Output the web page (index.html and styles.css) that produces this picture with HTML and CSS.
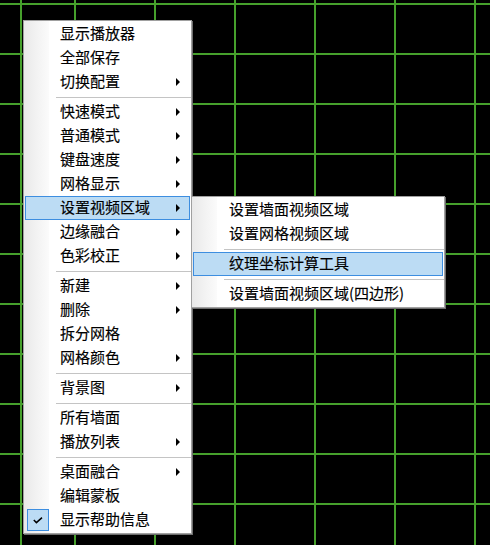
FILE: index.html
```html
<!DOCTYPE html>
<html lang="zh-CN">
<head>
<meta charset="utf-8">
<title>Menu</title>
<link rel="stylesheet" href="styles.css">
</head>
<body>
<div class="canvas">
  <div class="menu main-menu">
    <div class="item">显示播放器</div>
    <div class="item">全部保存</div>
    <div class="item sub">切换配置</div>
    <div class="sep"></div>
    <div class="item sub">快速模式</div>
    <div class="item sub">普通模式</div>
    <div class="item sub">键盘速度</div>
    <div class="item sub">网格显示</div>
    <div class="item sub hl">设置视频区域</div>
    <div class="item sub">边缘融合</div>
    <div class="item sub">色彩校正</div>
    <div class="sep"></div>
    <div class="item sub">新建</div>
    <div class="item sub">删除</div>
    <div class="item">拆分网格</div>
    <div class="item sub">网格颜色</div>
    <div class="sep"></div>
    <div class="item sub">背景图</div>
    <div class="sep"></div>
    <div class="item">所有墙面</div>
    <div class="item sub">播放列表</div>
    <div class="sep"></div>
    <div class="item sub">桌面融合</div>
    <div class="item">编辑蒙板</div>
    <div class="item checked"><span class="check"><svg width="10" height="7" viewBox="0 0 10 7"><path d="M0.8 3 L3.4 5.6 L9 0.6" fill="none" stroke="#000" stroke-width="1.5"/></svg></span>显示帮助信息</div>
  </div>
  <div class="menu sub-menu">
    <div class="item">设置墙面视频区域</div>
    <div class="item">设置网格视频区域</div>
    <div class="sep"></div>
    <div class="item hl">纹理坐标计算工具</div>
    <div class="sep"></div>
    <div class="item">设置墙面视频区域(四边形)</div>
  </div>
</div>
</body>
</html>
```
FILE: styles.css
```css
html, body {
  margin: 0;
  padding: 0;
  background: #000;
}

.canvas {
  position: relative;
  width: 490px;
  height: 545px;
  overflow: hidden;
  background-color: #000;
  background-image:
    linear-gradient(to right, transparent 20px, #46a02c 20px, #46a02c 22px, transparent 22px),
    repeating-linear-gradient(to right, transparent 0 74px, #46a02c 74px 76px, transparent 76px 80px),
    repeating-linear-gradient(to bottom, transparent 0 3px, #46a02c 3px 5px, transparent 5px 50px);
  font-family: "Noto Sans CJK SC", "Noto Sans", sans-serif;
  font-size: 15px;
  color: #000;
}

.menu {
  position: absolute;
  box-sizing: border-box;
  border: 1px solid #a0a0a0;
  box-shadow: 1px 1px 0 #6e6e6e;
  padding: 1px;
  background-color: #fff;
  background-image: linear-gradient(to right, #e9e9e9, #fbfbfb);
  background-size: 25px 100%;
  background-repeat: no-repeat;
}

.main-menu {
  left: 23px;
  top: 20px;
  width: 169px;
}

.sub-menu {
  left: 191px;
  top: 196px;
  width: 254px;
}

.item {
  position: relative;
  box-sizing: border-box;
  height: 24px;
  line-height: 22px;
  padding-left: 35px;
  white-space: nowrap;
  -webkit-text-stroke: 0.15px #000;
}

.sub-menu .item {
  padding-left: 36px;
}

.item.sub::after {
  content: "";
  position: absolute;
  right: 10px;
  top: 8px;
  width: 0;
  height: 0;
  border-left: 4px solid #000;
  border-top: 4px solid transparent;
  border-bottom: 4px solid transparent;
}

.item.hl {
  background: #bcdcf4;
  border: 1px solid #3d8ee0;
  padding-left: 34px;
  line-height: 20px;
}

.sub-menu .item.hl {
  padding-left: 35px;
}

.item.hl.sub::after {
  right: 9px;
  top: 7px;
}

.check {
  position: absolute;
  left: 2px;
  top: 1px;
  width: 22px;
  height: 22px;
  box-sizing: border-box;
  background: #bcdcf4;
  border: 1px solid #3d8ee0;
  display: flex;
  align-items: center;
  justify-content: center;
}

.check svg {
  display: block;
}

.sep {
  height: 1px;
  margin: 3px -1px 2px 31px;
  background: #c4c4c4;
}
```
